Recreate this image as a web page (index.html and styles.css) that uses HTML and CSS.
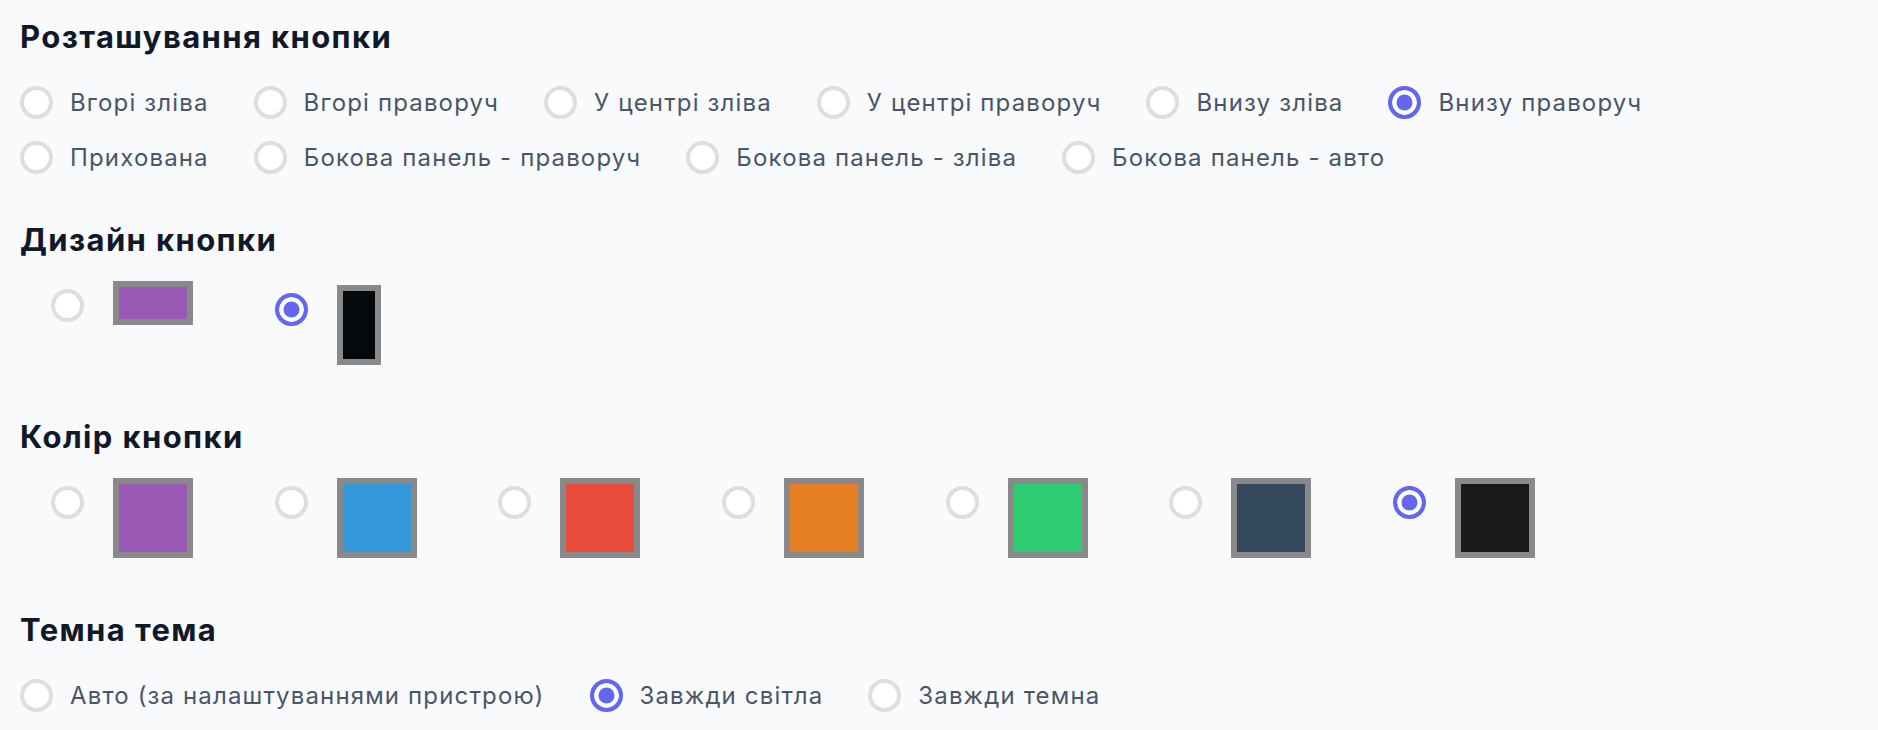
FILE: index.html
```html
<!DOCTYPE html>
<html lang="uk">
  <head>
    <meta charset="UTF-8" />
    <meta name="viewport" content="width=device-width,initial-scale=1" />
    <title>Налаштування кнопки</title>
    <link rel="stylesheet" href="styles.css">
  </head>
  <body>
    <section class="group">
      <h2 class="group-title">Розташування кнопки</h2>
      <div class="options">
        <label class="option"><input type="radio" class="radio" name="position" /><span>Вгорі зліва</span></label>
        <label class="option"><input type="radio" class="radio" name="position" /><span>Вгорі праворуч</span></label>
        <label class="option"><input type="radio" class="radio" name="position" /><span>У центрі зліва</span></label>
        <label class="option"><input type="radio" class="radio" name="position" /><span>У центрі праворуч</span></label>
        <label class="option"><input type="radio" class="radio" name="position" /><span>Внизу зліва</span></label>
        <label class="option"><input type="radio" class="radio" name="position" checked /><span>Внизу праворуч</span></label>
        <label class="option"><input type="radio" class="radio" name="position" /><span>Прихована</span></label>
        <label class="option"><input type="radio" class="radio" name="position" /><span>Бокова панель - праворуч</span></label>
        <label class="option"><input type="radio" class="radio" name="position" /><span>Бокова панель - зліва</span></label>
        <label class="option"><input type="radio" class="radio" name="position" /><span>Бокова панель - авто</span></label>
      </div>
    </section>

    <section class="group group-after-text">
      <h2 class="group-title">Дизайн кнопки</h2>
      <div class="swatches">
        <label class="swatch-option"><input type="radio" class="radio" name="design" /><span class="swatch swatch-wide" style="background-color: #9b59b6"></span></label>
        <label class="swatch-option swatch-option-low"><input type="radio" class="radio" name="design" checked /><span class="swatch swatch-tall" style="background-color: #050a0f"></span></label>
      </div>
    </section>

    <section class="group group-after-swatch">
      <h2 class="group-title">Колір кнопки</h2>
      <div class="swatches">
        <label class="swatch-option"><input type="radio" class="radio" name="color" /><span class="swatch" style="background-color: #9b59b6"></span></label>
        <label class="swatch-option"><input type="radio" class="radio" name="color" /><span class="swatch" style="background-color: #3498db"></span></label>
        <label class="swatch-option"><input type="radio" class="radio" name="color" /><span class="swatch" style="background-color: #e74c3c"></span></label>
        <label class="swatch-option"><input type="radio" class="radio" name="color" /><span class="swatch" style="background-color: #e67e22"></span></label>
        <label class="swatch-option"><input type="radio" class="radio" name="color" /><span class="swatch" style="background-color: #2ecc71"></span></label>
        <label class="swatch-option"><input type="radio" class="radio" name="color" /><span class="swatch" style="background-color: #34495e"></span></label>
        <label class="swatch-option"><input type="radio" class="radio" name="color" checked /><span class="swatch" style="background-color: #1a1a1a"></span></label>
      </div>
    </section>

    <section class="group group-after-swatch">
      <h2 class="group-title">Темна тема</h2>
      <div class="options">
        <label class="option"><input type="radio" class="radio" name="theme" /><span>Авто (за налаштуваннями пристрою)</span></label>
        <label class="option"><input type="radio" class="radio" name="theme" checked /><span>Завжди світла</span></label>
        <label class="option"><input type="radio" class="radio" name="theme" /><span>Завжди темна</span></label>
      </div>
    </section>
  </body>
</html>
```

FILE: styles.css
```css
body {
  margin: 0;
  padding: 18px 20px 0;
  background-color: #f8fafc;
  font-family: Inter, "Open Sans", sans-serif;
  color: #4a5568;
}

.group-title {
  margin: 0;
  font-size: 31px;
  line-height: 37px;
  font-weight: 700;
  letter-spacing: 1.4px;
  color: #111827;
}

.group-after-text {
  margin-top: 47px;
}

.group-after-swatch {
  margin-top: 47px;
}

.options {
  display: flex;
  flex-wrap: wrap;
  column-gap: 45px;
  row-gap: 22px;
  margin-top: 31px;
}

.option {
  display: flex;
  align-items: center;
  gap: 17px;
  font-size: 24px;
  line-height: 33px;
  letter-spacing: 1.15px;
  cursor: pointer;
}

.radio {
  appearance: none;
  -webkit-appearance: none;
  flex: none;
  width: 33px;
  height: 33px;
  margin: 0;
  border: 4px solid #dcdee2;
  border-radius: 50%;
  background-color: #fff;
  cursor: pointer;
}

.radio:checked {
  border-color: #6366f1;
  background-color: #6366f1;
  box-shadow: inset 0 0 0 4.5px #fff;
}

.swatches {
  display: flex;
  align-items: flex-start;
  gap: 81.67px;
  margin-top: 23px;
  padding-left: 31px;
  padding-bottom: 6px;
}

.swatch-option {
  display: flex;
  align-items: flex-start;
  gap: 29px;
  cursor: pointer;
}

.swatch-option .radio {
  margin-top: 7.5px;
}

.swatch-option-low {
  margin-top: 4px;
}

.swatch {
  display: block;
  width: 68px;
  height: 68px;
  border: 6px solid #898989;
}

.swatch-wide {
  height: 32px;
}

.swatch-tall {
  width: 32px;
}
```
